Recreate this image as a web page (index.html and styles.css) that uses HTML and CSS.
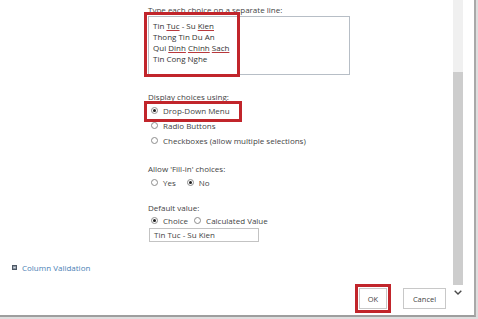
FILE: index.html
```html
<!DOCTYPE html>
<html>
<head>
<meta charset="utf-8">
<link rel="stylesheet" href="styles.css">
</head>
<body>
<div class="window">
  <div class="content">
    <div class="form">
      <div class="label first">Type each choice on a separate line:</div>
      <div class="textarea">
        <div>Tin <span class="sp">Tuc</span> - Su <span class="sp">Kien</span></div>
        <div>Thong Tin Du An</div>
        <div>Qui <span class="sp">Dinh</span> <span class="sp">Chinh</span> <span class="sp">Sach</span></div>
        <div>Tin Cong Nghe</div>
      </div>

      <div class="label display">Display choices using:</div>
      <div class="opts">
        <div class="opt"><span class="radio on"></span>Drop-Down Menu</div>
        <div class="opt"><span class="radio"></span>Radio Buttons</div>
        <div class="opt"><span class="radio"></span>Checkboxes (allow multiple selections)</div>
      </div>

      <div class="label section">Allow 'Fill-in' choices:</div>
      <div class="opt inline yesno">
        <span class="radio"></span><span class="choice-text">Yes</span>
        <span class="radio on"></span><span>No</span>
      </div>

      <div class="label section-sm">Default value:</div>
      <div class="opt inline defrow">
        <span class="radio on"></span><span class="choice-text">Choice</span>
        <span class="radio"></span><span>Calculated Value</span>
      </div>
      <div class="input">Tin Tuc - Su Kien</div>
    </div>

    <div class="validation">
      <svg class="vicon" width="5" height="5" viewBox="0 0 5 5"><rect x="0.5" y="0.5" width="4" height="4" fill="#8b96a3" stroke="#4e5865" stroke-width="1"/><rect x="1.5" y="2" width="2" height="1" fill="#d6dbe1"/></svg>
      <span>Column Validation</span>
    </div>

    <div class="buttons">
      <button class="btn ok">OK</button>
      <button class="btn cancel">Cancel</button>
    </div>

    <div class="mark mark-choices"></div>
    <div class="mark mark-display"></div>
  </div>

  <div class="scrollbar">
    <div class="track"></div>
    <div class="thumb"></div>
    <div class="arrow">
      <svg width="8" height="5" viewBox="0 0 8 5"><polyline points="0.7,0.7 4,4 7.3,0.7" fill="none" stroke="#4a4a4a" stroke-width="1.4"/></svg>
    </div>
  </div>
  <div class="edge"></div>
</div>
</body>
</html>
```

FILE: styles.css
```css
html, body {
  margin: 0;
  padding: 0;
}
body {
  width: 478px;
  height: 319px;
  overflow: hidden;
  background: #dedede;
  font-family: "Open Sans", "Noto Sans", sans-serif;
  font-size: 8px;
  color: #444;
}
.window {
  width: 474px;
  height: 315px;
  background: #fff;
  border-right: 2px solid #a9a9a9;
  border-bottom: 2px solid #9e9e9e;
  display: grid;
  grid-template-columns: 453px 10px 11px;
}
.content {
  position: relative;
  display: flex;
  flex-direction: column;
}
.form {
  margin-left: 148px;
  width: 202px;
  display: flex;
  flex-direction: column;
}
.label {
  line-height: 13px;
  white-space: nowrap;
}
.first { margin-top: 3px; }
.display { margin-top: 15px; }
.section { margin-top: 14px; }
.section-sm { margin-top: 12px; }
.textarea {
  height: 59px;
  box-sizing: border-box;
  border: 1px solid #b7bec6;
  padding: 3px 4px;
  line-height: 11px;
  color: #333;
}
.sp {
  text-decoration: underline;
  text-decoration-color: #b8383c;
  text-decoration-thickness: 1px;
  text-underline-offset: 1px;
}
.opts {
  display: flex;
  flex-direction: column;
}
.opt {
  display: flex;
  align-items: center;
  height: 15px;
  padding-left: 3px;
  white-space: nowrap;
}
.yesno { height: 14px; }
.defrow { height: 12px; }
.radio {
  flex: none;
  width: 7px;
  height: 7px;
  box-sizing: border-box;
  border: 1px solid #8c8c8c;
  border-radius: 50%;
  margin-right: 5px;
  display: flex;
  align-items: center;
  justify-content: center;
}
.radio.on::after {
  content: "";
  width: 3px;
  height: 3px;
  border-radius: 50%;
  background: #1e1e1e;
}
.yesno .choice-text { margin-right: 11px; }
.defrow .choice-text { margin-right: 6px; }
.input {
  margin-top: 2px;
  margin-left: 1px;
  width: 110px;
  height: 14px;
  box-sizing: border-box;
  border: 1px solid #c3c3c3;
  padding-left: 4px;
  line-height: 12px;
  white-space: nowrap;
}
.validation {
  display: flex;
  align-items: center;
  margin: 19px 0 0 12px;
  line-height: 13px;
  color: #4a7fb5;
}
.vicon {
  margin-right: 5px;
}
.buttons {
  display: flex;
  justify-content: flex-end;
  gap: 16px;
  margin-top: 14px;
  padding-right: 7px;
}
.btn {
  height: 21px;
  box-sizing: border-box;
  border: 1px solid #c8c8c8;
  background: #fff;
  font-family: inherit;
  font-size: 7.5px;
  color: #444;
  padding: 0;
}
.ok {
  width: 28px;
  outline: 3px solid #c1252b;
  outline-offset: 1px;
}
.cancel {
  width: 43px;
}
.mark {
  position: absolute;
  box-sizing: border-box;
  border: 3px solid #c1252b;
}
.mark-choices {
  left: 144px;
  top: 12px;
  width: 96px;
  height: 65px;
}
.mark-display {
  left: 144px;
  top: 101px;
  width: 98px;
  height: 21px;
}
.scrollbar {
  display: flex;
  flex-direction: column;
}
.track {
  height: 72px;
  background: #f0f0f0;
}
.thumb {
  height: 213px;
  background: #cdcdcd;
}
.arrow {
  height: 15px;
  display: flex;
  align-items: center;
  justify-content: center;
}
```
